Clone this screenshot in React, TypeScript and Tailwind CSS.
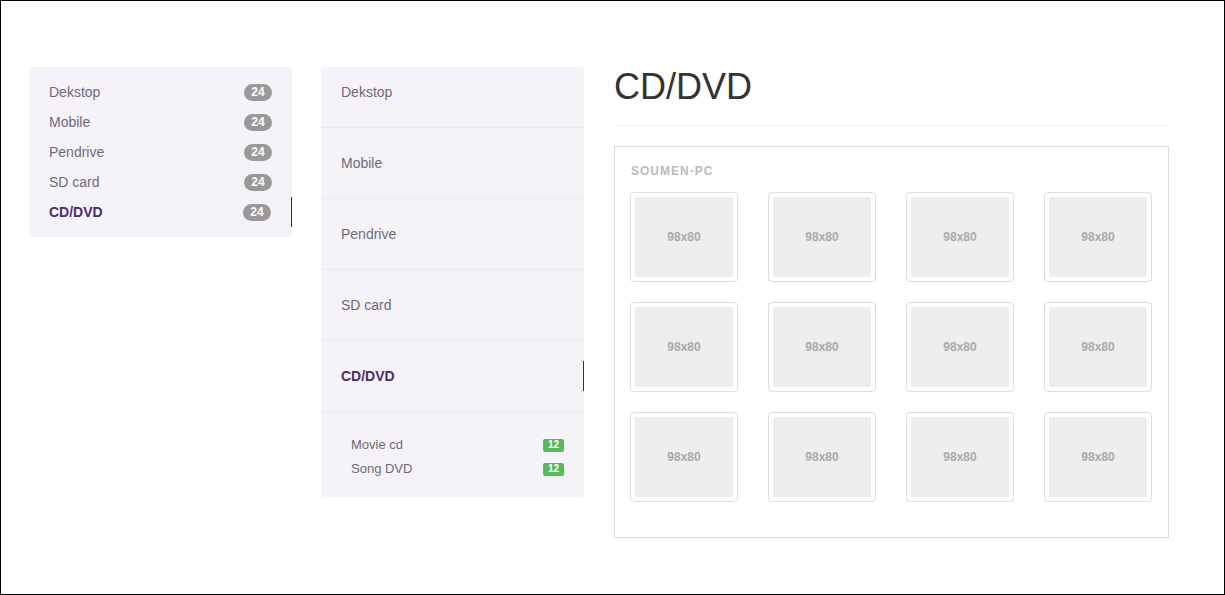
const categories = ["Dekstop", "Mobile", "Pendrive", "SD card", "CD/DVD"];

const subItems = [
  { name: "Movie cd", count: 12 },
  { name: "Song DVD", count: 12 },
];

function Thumb() {
  return (
    <div className="w-[108px] h-[90px] border border-[#ddd] rounded-[4px] p-[4px] bg-white">
      <div className="w-[98px] h-[80px] bg-[#eee] flex items-center justify-center text-[12px] font-bold text-[#aaa]">
        98x80
      </div>
    </div>
  );
}

export default function App() {
  const active = "CD/DVD";

  return (
    <div className="w-[1225px] h-[595px] border border-black bg-white font-['Liberation_Sans',Arial,sans-serif] overflow-hidden">
      <div className="flex items-start pl-[28px] pt-[66px]">
        {/* left list with counters */}
        <ul className="w-[263px] bg-[#f5f3f8] rounded-[4px] py-[10px]">
          {categories.map((c) => (
            <li
              key={c}
              className={
                c === active
                  ? "h-[30px] flex items-center justify-between pl-5 pr-5 border-r border-[#3d2b57] text-[14px] font-bold text-[#4b2e69]"
                  : "h-[30px] flex items-center justify-between pl-5 pr-5 text-[14px] text-[#6f6a78]"
              }
            >
              <span>{c}</span>
              <span className="w-[28px] h-[17px] rounded-full bg-[#999] text-white text-[12px] font-bold flex items-center justify-center">
                24
              </span>
            </li>
          ))}
        </ul>

        {/* tall menu */}
        <div className="w-[263px] ml-[29px] bg-[#f5f3f8] rounded-[4px]">
          <ul>
            {categories.map((c, i) => (
              <li
                key={c}
                className={
                  (i === 0 ? "h-[61px] pb-[10px] " : "h-[71px] ") +
                  "relative flex items-center pl-5 border-b border-[#ebe8ef] text-[14px] " +
                  (c === active ? "font-bold text-[#4b2e69]" : "text-[#6f6a78]")
                }
              >
                {c}
                {c === active && (
                  <span className="absolute right-0 top-[20px] h-[30px] w-px bg-[#3d2b57]" />
                )}
              </li>
            ))}
          </ul>
          <ul className="pt-[21px] pb-[16px] pl-[30px] pr-[20px]">
            {subItems.map((s) => (
              <li key={s.name} className="h-[24px] flex items-center justify-between text-[13px] text-[#6f6a78]">
                <span>{s.name}</span>
                <span className="w-[21px] h-[13px] rounded-[2px] bg-[#5cb85c] text-white text-[10px] font-bold flex items-center justify-center leading-none">
                  {s.count}
                </span>
              </li>
            ))}
          </ul>
        </div>

        {/* content */}
        <div className="w-[555px] ml-[30px]">
          <h1 className="text-[36px] leading-[40px] text-[#333] h-[40px]">CD/DVD</h1>
          <div className="mt-[18px] border-t border-[#eee]" />
          <div className="mt-[20px] h-[392px] border border-[#ddd] pl-[15px] pt-[16px]">
            <div className="ml-px text-[12px] font-bold tracking-[1px] text-[#bbb] leading-[16px]">SOUMEN-PC</div>
            <div className="mt-[13px] grid grid-cols-[repeat(4,108px)] gap-x-[30px] gap-y-[20px]">
              {Array.from({ length: 12 }).map((_, i) => (
                <Thumb key={i} />
              ))}
            </div>
          </div>
        </div>
      </div>
    </div>
  );
}
